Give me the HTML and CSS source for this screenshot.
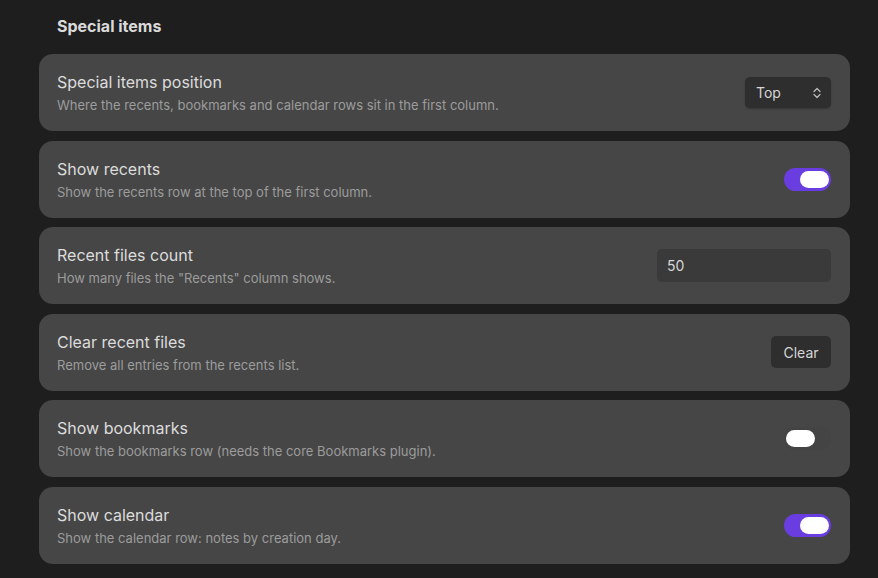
FILE: index.html
```html
<!DOCTYPE html>
<html>
<head>
<meta charset="utf-8">
<link rel="stylesheet" href="styles.css">
</head>
<body>
<div class="page">
  <h2 class="section-title">Special items</h2>
  <div class="list">
    <div class="card">
      <div class="info">
        <div class="name">Special items position</div>
        <div class="desc">Where the recents, bookmarks and calendar rows sit in the first column.</div>
      </div>
      <div class="select">
        <span>Top</span>
        <svg class="chev" width="10" height="14" viewBox="0 0 10 14"><path d="M2 5.5L5 2.5L8 5.5M2 8.5L5 11.5L8 8.5" fill="none" stroke="#bdbdbd" stroke-width="1.2" stroke-linecap="round" stroke-linejoin="round"/></svg>
      </div>
    </div>
    <div class="card">
      <div class="info">
        <div class="name">Show recents</div>
        <div class="desc">Show the recents row at the top of the first column.</div>
      </div>
      <div class="toggle on"><div class="knob"></div></div>
    </div>
    <div class="card">
      <div class="info">
        <div class="name">Recent files count</div>
        <div class="desc">How many files the "Recents" column shows.</div>
      </div>
      <div class="input">50</div>
    </div>
    <div class="card">
      <div class="info">
        <div class="name">Clear recent files</div>
        <div class="desc">Remove all entries from the recents list.</div>
      </div>
      <div class="button">Clear</div>
    </div>
    <div class="card">
      <div class="info">
        <div class="name">Show bookmarks</div>
        <div class="desc">Show the bookmarks row (needs the core Bookmarks plugin).</div>
      </div>
      <div class="toggle"><div class="knob"></div></div>
    </div>
    <div class="card">
      <div class="info">
        <div class="name">Show calendar</div>
        <div class="desc">Show the calendar row: notes by creation day.</div>
      </div>
      <div class="toggle on"><div class="knob"></div></div>
    </div>
  </div>
</div>
</body>
</html>
```
FILE: styles.css
```css
* { box-sizing: border-box; }
html, body {
  margin: 0;
  background: #1e1e1e;
  font-family: Inter, "Noto Sans", sans-serif;
  color: #dadada;
}
.page {
  padding: 16px 28px 0 39px;
}
.section-title {
  margin: 0 0 18px 18px;
  font-size: 16px;
  line-height: 20px;
  font-weight: 700;
  color: #dadada;
}
.list {
  display: flex;
  flex-direction: column;
  gap: 9.6px;
}
.card {
  height: 77px;
  background: #464646;
  border-radius: 14px;
  display: flex;
  align-items: center;
  justify-content: space-between;
  padding: 0 19px 0 18px;
}
.info { display: flex; flex-direction: column; padding-top: 1px; }
.name {
  font-size: 16px;
  line-height: 20px;
  color: #dcdcdc;
  font-weight: 400;
}
.desc {
  margin-top: 4px;
  font-size: 13px;
  line-height: 18px;
  color: #9c9c9c;
}
.select {
  width: 86px;
  height: 31px;
  background: #2e2e2e;
  border-radius: 5px;
  display: flex;
  align-items: center;
  justify-content: space-between;
  padding: 0 9px 0 11px;
  font-size: 14px;
  color: #d6d6d6;
  box-shadow: 0 1px 2px rgba(0,0,0,0.25);
}
.toggle {
  width: 47px;
  height: 23px;
  border-radius: 12px;
  background: #444444;
  position: relative;
}
.toggle .knob {
  position: absolute;
  top: 3px;
  left: 2px;
  width: 29px;
  height: 17px;
  border-radius: 9px;
  background: #ffffff;
}
.toggle.on { background: #6a3de0; }
.toggle.on .knob { left: 16px; }
.input {
  width: 174px;
  height: 33px;
  background: #3a3a3a;
  border-radius: 5px;
  display: flex;
  align-items: center;
  padding: 0 10px;
  font-size: 14px;
  color: #d6d6d6;
}
.button {
  width: 60px;
  height: 32px;
  background: #2e2e2e;
  border-radius: 5px;
  display: flex;
  align-items: center;
  justify-content: center;
  font-size: 14px;
  color: #d6d6d6;
  font-weight: 400;
}
```
